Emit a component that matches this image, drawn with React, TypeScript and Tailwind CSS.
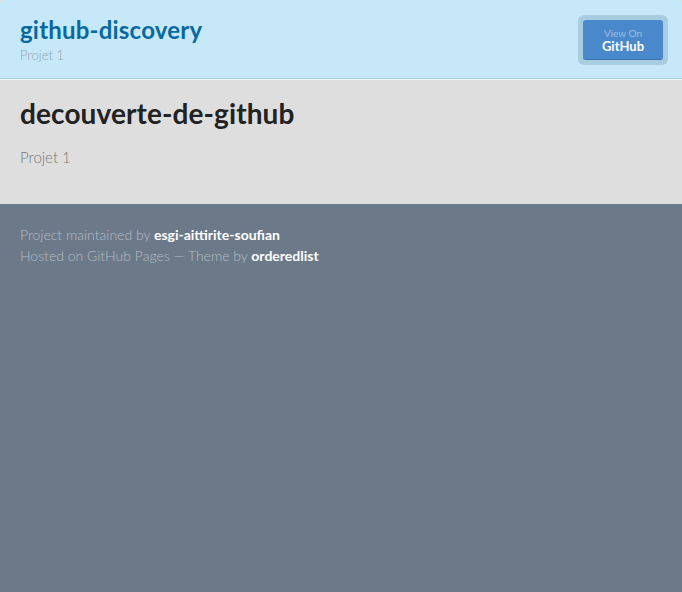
export default function App() {
  return (
    <div className="min-h-[592px] bg-[#6c7989] font-['Lato','Liberation_Sans',sans-serif]">
      <div className="bg-[#dedede]">
        <header className="flex h-[79px] items-start justify-between rounded-t-[4px] border-b border-[#a5cde3] bg-[#c6e8f9] pl-[20px] pr-[14px]">
          <div className="pt-[15px]">
            <h1 className="text-[24px] font-bold leading-[30px] tracking-[0.2px] text-[#0869a1]">github-discovery</h1>
            <p className="mt-[2px] text-[13px] font-light leading-[16px] text-[#8fa5b2]">Projet 1</p>
          </div>
          <div className="mt-[15px] rounded-[6px] bg-[#a9cde0] p-[5px]">
            <a className="flex h-[40px] w-[80px] flex-col items-center justify-start rounded-[3px] border-b border-[#3a70ab] bg-[#4a88cc] pt-[7px] text-center">
              <span className="text-[10px] leading-[12px] text-[#9dbfe4]">View On</span>
              <span className="text-[13px] font-bold leading-[15px] text-white">GitHub</span>
            </a>
          </div>
        </header>
        <div className="h-px bg-white/70" />
        <main className="px-[20px] pb-[37px] pt-[16px]">
          <h2 className="text-[28px] font-bold leading-[34px] tracking-[0.1px] text-[#222]">decouverte-de-github</h2>
          <p className="mt-[17px] text-[15px] font-light leading-[20px] text-[#777]">Projet 1</p>
        </main>
      </div>
      <footer className="px-[20px] pt-[20px] text-[14px] font-light leading-[21px] text-[#b5bcc5]">
        <p>
          Project maintained by <a className="font-bold text-white">esgi-aittirite-soufian</a>
        </p>
        <p>
          Hosted on GitHub Pages — Theme by <a className="font-bold text-white">orderedlist</a>
        </p>
      </footer>
    </div>
  );
}
